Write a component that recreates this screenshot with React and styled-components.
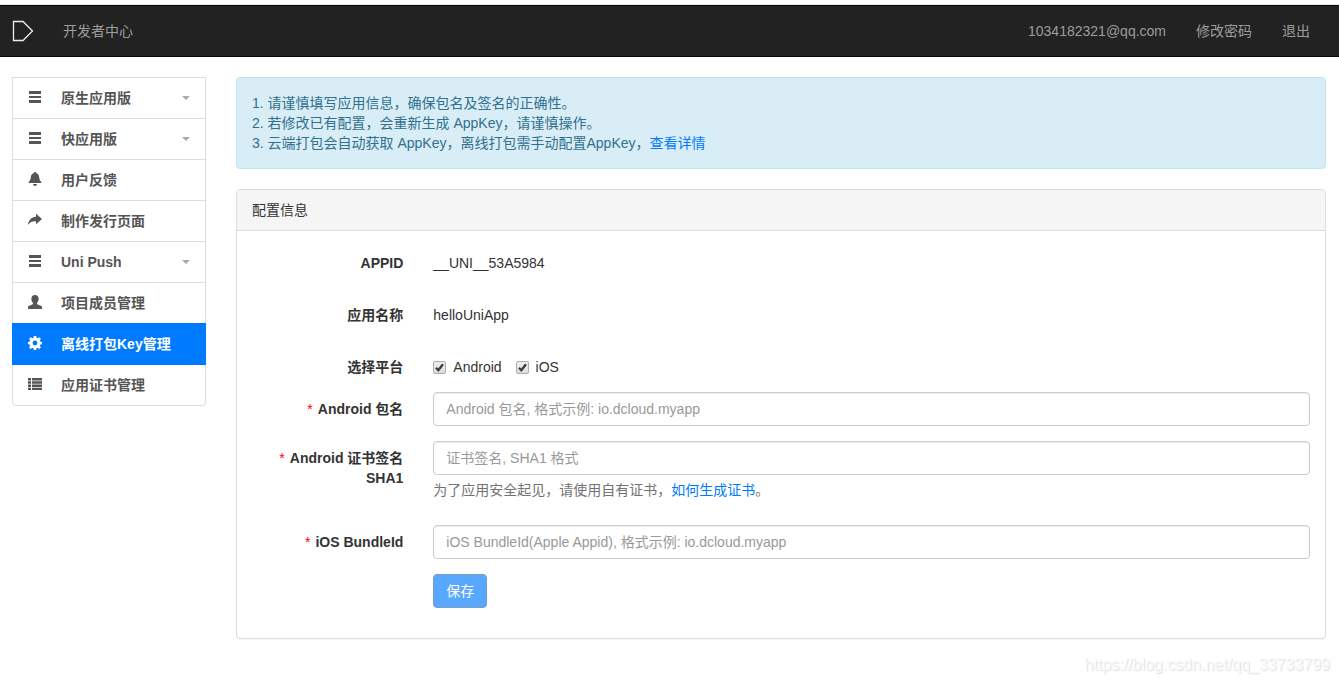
import React from 'react';
import styled, { createGlobalStyle, css } from 'styled-components';

const GlobalStyle = createGlobalStyle`
  * {
    box-sizing: border-box;
  }
  body {
    margin: 0;
    background-color: #fff;
    color: #333;
    font-family: 'Liberation Sans', 'Noto Sans CJK SC', sans-serif;
    font-size: 14px;
    line-height: 20px;
  }
  a {
    color: #007bff;
    text-decoration: none;
  }
`;

const Page = styled.div`
  border-top: 1px solid #e7e7e7;
  margin-top: 4px;
`;

const Navbar = styled.nav`
  display: flex;
  align-items: center;
  height: 52px;
  padding: 0 29px 0 12px;
  background-color: #222;
  border-top: 1px solid #080808;
  border-bottom: 1px solid #080808;

  a {
    color: #9d9d9d;
  }
`;

const Brand = styled.a`
  display: flex;
  margin-right: 29px;
`;

const NavRight = styled.div`
  display: flex;
  gap: 30px;
  margin-left: auto;
`;

const Content = styled.div`
  display: grid;
  grid-template-columns: repeat(12, minmax(0, 1fr));
  column-gap: 30px;
  align-items: start;
  padding: 20px 13px 0 12px;
`;

const Sidebar = styled.aside`
  grid-column: span 2;
`;

const Main = styled.main`
  grid-column: span 10;
`;

const MenuLink = styled.a`
  display: flex;
  align-items: center;
  height: 42px;
  padding: 0 15px;
  border: 1px solid #ddd;
  font-weight: bold;

  && {
    color: #555;
  }

  & + & {
    margin-top: -1px;
  }

  &:last-child {
    border-radius: 0 0 4px 4px;
  }

  svg {
    flex: none;
    margin: 0 19px 2px 0;
  }

  ${({ $active }) =>
    $active &&
    css`
      position: relative;
      background-color: #007bff;
      border-color: #007bff;

      && {
        color: #fff;
      }
    `}
`;

const Caret = styled.span`
  margin-left: auto;
  border-top: 4px solid #aaa;
  border-left: 4px solid transparent;
  border-right: 4px solid transparent;
`;

const Alert = styled.div`
  margin-bottom: 20px;
  padding: 15px;
  background-color: #d9edf7;
  border: 1px solid #bce8f1;
  border-radius: 4px;
  color: #31708f;

  p {
    margin: 0;
  }
`;

const Panel = styled.section`
  border: 1px solid #ddd;
  border-radius: 4px;
  box-shadow: 0 1px 1px rgba(0, 0, 0, 0.05);
`;

const PanelHeading = styled.h3`
  margin: 0;
  padding: 10px 15px;
  background-color: #f5f5f5;
  border-bottom: 1px solid #ddd;
  border-radius: 3px 3px 0 0;
  font-size: 14px;
  font-weight: normal;
`;

const Form = styled.form`
  padding: 15px 15px 30px;
`;

const Row = styled.div`
  display: grid;
  grid-template-columns: repeat(12, minmax(0, 1fr));
  column-gap: 30px;
  align-items: start;
  min-height: ${({ $tall }) => ($tall ? '37px' : '0')};

  & + & {
    margin-top: 15px;
  }
`;

const labelStyle = css`
  grid-column: span 2;
  padding-top: 7px;
  text-align: right;
  font-weight: bold;
`;

const Label = styled.label`
  ${labelStyle}
`;

const Caption = styled.span`
  ${labelStyle}
`;

const Star = styled.span`
  margin-right: 5px;
  color: #f00;
  font-weight: normal;
`;

const Field = styled.div`
  grid-column: 3 / span 10;
`;

const StaticText = styled.div`
  padding-top: 7px;
`;

const Checks = styled.div`
  display: flex;
  gap: 14px;
  padding-top: 7px;
`;

const CheckLabel = styled.label`
  position: relative;
  display: flex;
  align-items: center;
  gap: 7px;

  input {
    appearance: none;
    width: 13px;
    height: 13px;
    margin: 0;
    border: 1px solid #adadad;
    border-radius: 2px;
    background: linear-gradient(#efefef, #dcdcdc);
  }

  svg {
    position: absolute;
    left: 0;
    display: none;
    pointer-events: none;
  }

  input:checked + svg {
    display: block;
  }
`;

const Input = styled.input`
  display: block;
  width: 100%;
  height: 34px;
  padding: 6px 12px;
  border: 1px solid #ccc;
  border-radius: 4px;
  box-shadow: inset 0 1px 1px rgba(0, 0, 0, 0.075);
  color: #555;
  font: inherit;

  &::placeholder {
    color: #999;
    opacity: 1;
  }
`;

const Help = styled.p`
  margin: 5px 0 10px;
  color: #737373;
`;

const SaveButton = styled.button`
  display: block;
  padding: 6px 12px;
  border: 1px solid #2e6da4;
  border-radius: 4px;
  background-color: #007bff;
  color: #fff;
  font: inherit;
  opacity: 0.65;
`;

const Watermark = styled.footer`
  padding: 16px 9px 0 0;
  text-align: right;
  font-size: 16px;
  color: #fafafa;
  text-shadow: 1px 1px 1px #ddd;
`;

const icons = {
  menu: <path d="M1 1h12v3H1zM1 6h12v2H1zM1 10h12v3H1z" />,
  bell: (
    <path d="M7 0c.8 0 1.300.5 1.300 1.200C10.200 1.800 11 3.200 11.200 5.200c.2 2.300.9 3.400 2.100 4.700.3.600 0 1.100-.6 1.100H1.300c-.6 0-.9-.5-.6-1.100C1.900 8.600 2.600 7.500 2.800 5.200 3 3.200 3.800 1.800 5.700 1.200 5.700.5 6.200 0 7 0zM5 12h4c-.2 1.200-.9 2-2 2s-1.800-.8-2-2z" />
  ),
  share: (
    <path d="M8 .8 14 6l-6 5.200V8.300C4.500 8.100 2 9 0 12 .5 7.200 3.300 4.100 8 3.700z" />
  ),
  user: (
    <path d="M7 0c2.400 0 3.600 1.400 3.600 3.700 0 1.800-.6 3.200-1.500 4.100-.2.900 0 1.400.6 1.700l3.200 1.300c.8.400 1.100.9 1.100 1.800V14H0v-1.400c0-.9.3-1.400 1.100-1.800l3.200-1.300c.6-.3.800-.8.6-1.700-.9-.9-1.500-2.300-1.500-4.100C3.400 1.400 4.600 0 7 0z" />
  ),
  cog: (
    <path
      fillRule="evenodd"
      d="M5.800 0h2.400l.4 1.900 1 .4 1.700-1.100 1.600 1.600-1.100 1.700.4 1 1.800.4v2.300l-1.800.4-.4 1 1.100 1.700-1.600 1.600-1.700-1.100-1 .4-.4 1.800H5.800l-.4-1.800-1-.4-1.700 1.100-1.600-1.600 1.100-1.700-.4-1L0 8.200V5.900l1.800-.4.4-1-1.100-1.700 1.600-1.600 1.700 1.100 1-.4zM7 4.600a2.400 2.400 0 1 0 0 4.800 2.400 2.400 0 0 0 0-4.800z"
    />
  ),
  list: (
    <path d="M0 1h3v2.500H0zM4 1h10v2.500H4zM0 4.300h3v2.400H0zM4 4.300h10v2.400H4zM0 7.500h3v2.400H0zM4 7.500h10v2.400H4zM0 10.700h3v2.400H0zM4 10.700h10v2.400H4z" />
  ),
};

const Icon = ({ name }) => (
  <svg width="14" height="14" viewBox="0 0 14 14" fill="currentColor" aria-hidden="true">
    {icons[name]}
  </svg>
);

const menu = [
  { icon: 'menu', text: '原生应用版', caret: true },
  { icon: 'menu', text: '快应用版', caret: true },
  { icon: 'bell', text: '用户反馈' },
  { icon: 'share', text: '制作发行页面' },
  { icon: 'menu', text: 'Uni Push', caret: true },
  { icon: 'user', text: '项目成员管理' },
  { icon: 'cog', text: '离线打包Key管理', active: true },
  { icon: 'list', text: '应用证书管理' },
];

const Check = ({ children }) => (
  <CheckLabel>
    <input type="checkbox" defaultChecked />
    <svg width="13" height="13" viewBox="0 0 13 13" aria-hidden="true">
      <path d="M3 6.800 5.300 9.200 10 3.200" fill="none" stroke="#3c3c3c" strokeWidth="2.300" />
    </svg>
    {children}
  </CheckLabel>
);

export default function App() {
  return (
    <>
      <GlobalStyle />
      <Page>
        <Navbar>
          <Brand href="#" aria-label="DCloud">
            <svg width="22" height="22" viewBox="0 0 22 22" fill="none" stroke="#eee">
              <path d="M1.500 1.500h9.500l9.500 9.500-9.500 9.500H1.500z" strokeWidth="1.300" />
            </svg>
          </Brand>
          <a href="#">开发者中心</a>
          <NavRight>
            <a href="#">1034182321@qq.com</a>
            <a href="#">修改密码</a>
            <a href="#">退出</a>
          </NavRight>
        </Navbar>

        <Content>
          <Sidebar>
            {menu.map((item) => (
              <MenuLink key={item.text} href="#" $active={item.active}>
                <Icon name={item.icon} />
                {item.text}
                {item.caret && <Caret />}
              </MenuLink>
            ))}
          </Sidebar>

          <Main>
            <Alert>
              <p>1. 请谨慎填写应用信息，确保包名及签名的正确性。</p>
              <p>2. 若修改已有配置，会重新生成 AppKey，请谨慎操作。</p>
              <p>
                3. 云端打包会自动获取 AppKey，离线打包需手动配置AppKey，
                <a href="#">查看详情</a>
              </p>
            </Alert>

            <Panel>
              <PanelHeading>配置信息</PanelHeading>
              <Form>
                <Row $tall>
                  <Caption>APPID</Caption>
                  <Field>
                    <StaticText>__UNI__53A5984</StaticText>
                  </Field>
                </Row>
                <Row $tall>
                  <Caption>应用名称</Caption>
                  <Field>
                    <StaticText>helloUniApp</StaticText>
                  </Field>
                </Row>
                <Row>
                  <Caption>选择平台</Caption>
                  <Field>
                    <Checks>
                      <Check>Android</Check>
                      <Check>iOS</Check>
                    </Checks>
                  </Field>
                </Row>
                <Row>
                  <Label htmlFor="package">
                    <Star>*</Star>Android 包名
                  </Label>
                  <Field>
                    <Input id="package" placeholder="Android 包名, 格式示例: io.dcloud.myapp" />
                  </Field>
                </Row>
                <Row>
                  <Label htmlFor="sha1">
                    <Star>*</Star>Android 证书签名 SHA1
                  </Label>
                  <Field>
                    <Input id="sha1" placeholder="证书签名, SHA1 格式" />
                    <Help>
                      为了应用安全起见，请使用自有证书，<a href="#">如何生成证书</a>。
                    </Help>
                  </Field>
                </Row>
                <Row>
                  <Label htmlFor="bundle">
                    <Star>*</Star>iOS BundleId
                  </Label>
                  <Field>
                    <Input
                      id="bundle"
                      placeholder="iOS BundleId(Apple Appid), 格式示例: io.dcloud.myapp"
                    />
                  </Field>
                </Row>
                <Row>
                  <Field>
                    <SaveButton type="submit" disabled>
                      保存
                    </SaveButton>
                  </Field>
                </Row>
              </Form>
            </Panel>
          </Main>
        </Content>
        <Watermark>https://blog.csdn.net/qq_33733799</Watermark>
      </Page>
    </>
  );
}
